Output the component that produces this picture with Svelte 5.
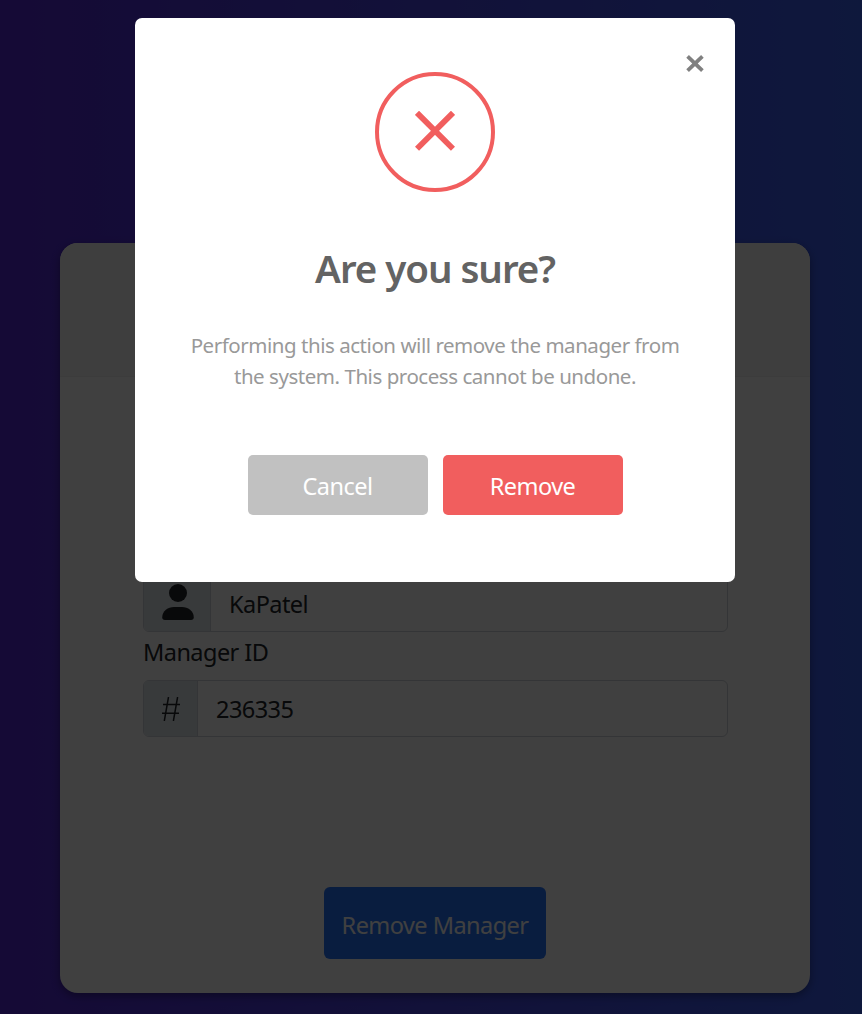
<script>
  const managerName = 'KaPatel';
  const managerId = '236335';
</script>

<main class="page">
  <section class="card">
    <header class="card-header"></header>
    <div class="card-body">
      <div class="group name">
        <span class="addon person">
          <svg width="36" height="36" viewBox="0 0 16 16" fill="#212529" aria-hidden="true">
            <circle cx="8" cy="4" r="4" />
            <path d="M2.2 16Q1 16 1 14.8C1 12 3.6 10.2 6.2 10.2H9.8C12.4 10.2 15 12 15 14.8Q15 16 13.8 16Z" />
          </svg>
        </span>
        <span class="value">{managerName}</span>
      </div>
      <div class="label">Manager ID</div>
      <div class="group id">
        <span class="addon hash">
          <svg width="18" height="24" viewBox="0 0 18 24" fill="none" stroke="#212529" stroke-width="1.5" aria-hidden="true">
            <path d="M6.5 0L2.3 24M15.6 0L11.4 24M1 7.6H18M0 16.2H17" />
          </svg>
        </span>
        <span class="value digits">{managerId}</span>
      </div>
      <button class="submit">Remove Manager</button>
    </div>
  </section>

  <div class="backdrop">
    <div class="dialog" role="dialog" aria-modal="true">
      <button class="close" aria-label="Close">
        <svg width="18" height="18" viewBox="0 0 18 18" fill="none" stroke="#808080" stroke-width="3.8" aria-hidden="true">
          <path d="M1.6 1.4L16.4 15.6M16.4 1.4L1.6 15.6" />
        </svg>
      </button>
      <div class="icon-box">
        <svg width="40" height="40" viewBox="0 0 40 40" fill="none" stroke="#f15e5e" stroke-width="5.8" aria-hidden="true">
          <path d="M2 1.8L38 37.8M38 1.8L2 37.8" />
        </svg>
      </div>
      <h4>Are you sure?</h4>
      <p>
        Performing this action will remove the manager from<br />
        the system. This process cannot be undone.
      </p>
      <div class="actions">
        <button class="cancel">Cancel</button>
        <button class="remove">Remove</button>
      </div>
    </div>
  </div>
</main>

<style>
  :global(body) { margin: 0; overflow: hidden; }
  * { box-sizing: border-box; }
  .page {
    position: relative;
    height: 1014px;
    padding: 243px 52px 0 60px;
    background: linear-gradient(to right, #5529d5, #3b60f0);
    font-family: "Noto Sans", "Open Sans", sans-serif;
    font-size: 23.5px;
    letter-spacing: -0.55px;
    color: #212529;
    overflow: hidden;
  }
  button { font: inherit; letter-spacing: inherit; border: 0; padding: 0; }
  .card {
    width: 750px;
    height: 750px;
    background: #fff;
    border-radius: 18px;
    box-shadow: 0 3px 9px rgba(0, 0, 0, .35);
    overflow: hidden;
  }
  .card-header { height: 134px; background: #f7f7f7; border-bottom: 1px solid #f0f0f0; }
  .card-body { display: flex; flex-direction: column; padding: 197px 82px 0 83px; }
  .group {
    display: flex;
    width: 585px;
    border: 1px solid #ced4da;
    border-radius: 6px;
    overflow: hidden;
  }
  .name { height: 58px; }
  .id { height: 57px; }
  .addon {
    display: flex;
    align-items: center;
    justify-content: center;
    background: #e0e5ea;
    border-right: 1px solid #ced4da;
  }
  .person { width: 67px; padding: 0 0 2px 2px; }
  .hash { width: 54px; }
  .value { display: flex; align-items: center; padding: 1px 0 0 18px; }
  .label { height: 48px; line-height: 40px; }
  .submit {
    align-self: center;
    width: 222px;
    height: 72px;
    margin: 150px 1px 0 0;
    padding-top: 3px;
    border-radius: 6px;
    background: #2575fc;
    color: #fff;
  }
  .backdrop {
    position: absolute;
    inset: 0;
    padding: 18px 0 0 135px;
    background: rgba(0, 0, 0, .75);
  }
  .dialog {
    position: relative;
    display: flex;
    flex-direction: column;
    align-items: center;
    width: 600px;
    height: 564px;
    padding-top: 54px;
    border-radius: 7px;
    background: #fff;
  }
  .close {
    position: absolute;
    top: 37px;
    right: 31px;
    width: 18px;
    height: 18px;
    background: none;
  }
  .close svg { display: block; }
  .icon-box {
    display: flex;
    align-items: center;
    justify-content: center;
    width: 120px;
    height: 120px;
    padding-bottom: 3px;
    border: 4px solid #f15e5e;
    border-radius: 50%;
  }
  h4 {
    margin: 49px 0 0;
    font-size: 38.5px;
    letter-spacing: -1.05px;
    line-height: 54px;
    font-weight: 600;
    color: #636363;
  }
  p {
    margin: 35px 0 0;
    font-size: 20.5px;
    letter-spacing: -0.46px;
    line-height: 31px;
    color: #999;
    text-align: center;
    white-space: nowrap;
  }
  .actions { display: flex; gap: 15px; margin-top: 63px; }
  .actions button {
    width: 180px;
    height: 60px;
    padding-top: 2px;
    border-radius: 5px;
    color: #fff;
  }
  .actions .cancel { background: #c1c1c1; }
  .actions .remove { background: #f15e5e; }
</style>
